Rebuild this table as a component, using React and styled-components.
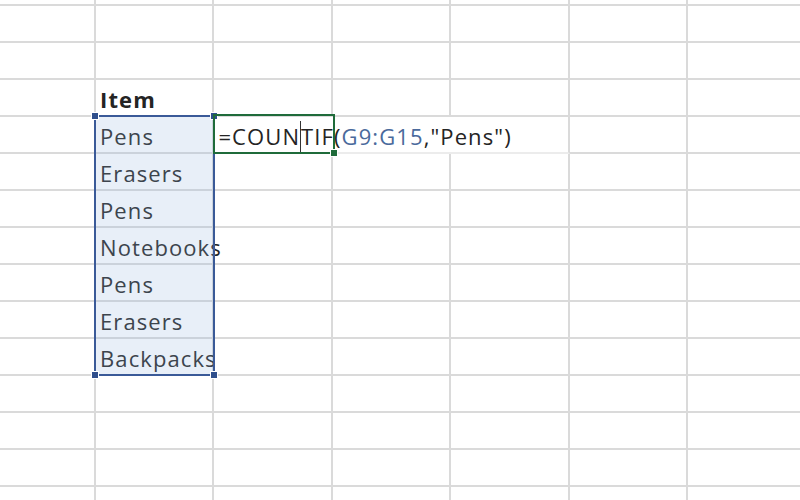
import React from "react";
import styled, { createGlobalStyle } from "styled-components";

const GlobalStyle = createGlobalStyle`
  html, body {
    margin: 0;
    padding: 0;
    background: #ffffff;
    overflow: hidden;
  }
  body {
    font-family: "Open Sans", "Noto Sans", sans-serif;
  }
`;

const COLS = 8;
const ROWS = 15;

const Sheet = styled.div`
  position: relative;
  width: 800px;
  height: 500px;
  overflow: hidden;
  display: grid;
  grid-template-columns: 96px repeat(7, 118.4px);
  grid-template-rows: 6px repeat(14, 37px);
`;

const Cell = styled.div`
  box-sizing: border-box;
  border-right: 2px solid #dadada;
  border-bottom: 2px solid ${(p) => (p.$soft ? "#ececec" : "#dadada")};
  padding-left: 4px;
  font-size: 22px;
  letter-spacing: 1.1px;
  line-height: 38px;
  color: #242424;
  font-weight: ${(p) => (p.$bold ? 700 : 500)};
  white-space: nowrap;
  overflow: visible;
  position: relative;
  z-index: ${(p) => (p.$front ? 2 : 1)};
  background: ${(p) => (p.$front ? "#ffffff" : "transparent")};
  grid-column: span ${(p) => p.$span || 1};
`;

const Ref = styled.span`
  color: #4a6a9c;
`;

const Caret = styled.span`
  display: inline-block;
  width: 1px;
  height: 31px;
  background: #333333;
  vertical-align: -7px;
  margin: 0 0.5px 0 -0.5px;
`;

const RangeBox = styled.div`
  position: absolute;
  left: 94px;
  top: 115px;
  width: 121px;
  height: 261px;
  box-sizing: border-box;
  border: 2px solid #3a5a98;
  background: rgba(150, 180, 225, 0.22);
  z-index: 3;
`;

const ActiveBox = styled.div`
  position: absolute;
  left: 213px;
  top: 114px;
  width: 122px;
  height: 40px;
  box-sizing: border-box;
  border: 2px solid #1f6b3a;
  z-index: 4;
`;

const Handle = styled.div`
  position: absolute;
  width: 6px;
  height: 6px;
  background: ${(p) => p.$color};
  border: 1px solid #ffffff;
  ${(p) => (p.$bottom ? "bottom: -5px;" : "top: -5px;")}
  ${(p) => (p.$right ? "right: -5px;" : "left: -5px;")}
`;

const items = {
  3: { text: "Item", bold: true },
  4: { text: "Pens" },
  5: { text: "Erasers" },
  6: { text: "Pens" },
  7: { text: "Notebooks" },
  8: { text: "Pens" },
  9: { text: "Erasers" },
  10: { text: "Backpacks" },
};

function rowCells(r) {
  const cells = [];
  for (let c = 0; c < COLS; c++) {
    const key = `${r}-${c}`;
    if (r === 4 && c === 2) {
      cells.push(
        <Cell key={key} $span={3} $front $soft>
          =COUN<Caret />TIF(<Ref>G9:G15</Ref>,"Pens")
        </Cell>
      );
      c += 2;
      continue;
    }
    const item = c === 1 ? items[r] : null;
    cells.push(
      <Cell key={key} $bold={item && item.bold}>
        {item ? item.text : ""}
      </Cell>
    );
  }
  return cells;
}

export default function App() {
  const cells = [];
  for (let r = 0; r < ROWS; r++) cells.push(...rowCells(r));
  return (
    <>
      <GlobalStyle />
      <Sheet>
        {cells}
        <RangeBox>
          <Handle $color="#2f4f8c" />
          <Handle $color="#2f4f8c" $right />
          <Handle $color="#2f4f8c" $bottom />
          <Handle $color="#2f4f8c" $bottom $right />
        </RangeBox>
        <ActiveBox>
          <Handle $color="#1f6b3a" $bottom $right />
        </ActiveBox>
      </Sheet>
    </>
  );
}
